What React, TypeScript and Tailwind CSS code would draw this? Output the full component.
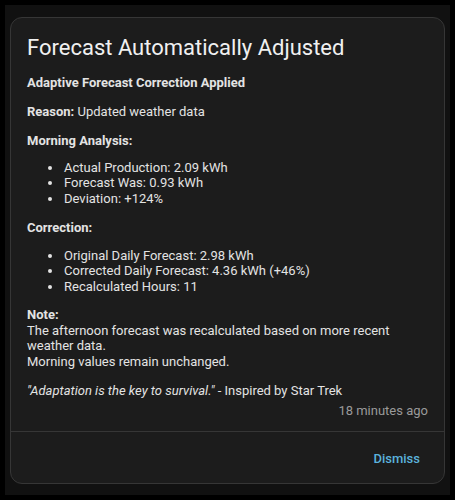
export default function App() {
  const morning = ["Actual Production: 2.09 kWh", "Forecast Was: 0.93 kWh", "Deviation: +124%"];
  const correction = [
    "Original Daily Forecast: 2.98 kWh",
    "Corrected Daily Forecast: 4.36 kWh (+46%)",
    "Recalculated Hours: 11",
  ];

  return (
    <div className="h-[500px] w-[455px] bg-black p-[5px] font-['Roboto',sans-serif]">
      <div className="h-full w-full bg-[#111111] px-[5px] pt-[12px] pb-[11px]">
        {/* notification card */}
        <div className="flex h-full flex-col rounded-[12px] border border-[#363636] bg-[#1c1c1c]">
          <div className="flex-1 px-4 pt-[16px] text-[13px] leading-[15.5px] text-[#e3e3e3]">
            <h2 className="text-[22px] leading-[28px] font-normal text-[#f0f0f0]">
              Forecast Automatically Adjusted
            </h2>
            <p className="mt-[13px] font-bold">Adaptive Forecast Correction Applied</p>
            <p className="mt-[13.5px]">
              <b>Reason:</b> Updated weather data
            </p>
            <p className="mt-[13.5px] font-bold">Morning Analysis:</p>
            <ul className="mt-[11px] list-disc pl-[36px]">
              {morning.map((item) => (
                <li key={item} className="pl-[1px]">{item}</li>
              ))}
            </ul>
            <p className="mt-[14px] font-bold">Correction:</p>
            <ul className="mt-[12px] list-disc pl-[36px]">
              {correction.map((item) => (
                <li key={item} className="pl-[1px]">{item}</li>
              ))}
            </ul>
            <p className="mt-[13px]">
              <b>Note:</b>
              <br />
              The afternoon forecast was recalculated based on more recent weather data.
              <br />
              Morning values remain unchanged.
            </p>
            <p className="mt-[14px]">
              <i>"Adaptation is the key to survival."</i> - Inspired by Star Trek
            </p>
            <div className="mt-[4px] text-right text-[#9a9a9a]">18 minutes ago</div>
          </div>
          <div className="flex h-[52px] items-center justify-end border-t border-[#363636] px-6 pt-[2px]">
            <button className="text-[13px] font-medium text-[#5bb3dc]">Dismiss</button>
          </div>
        </div>
      </div>
    </div>
  );
}
